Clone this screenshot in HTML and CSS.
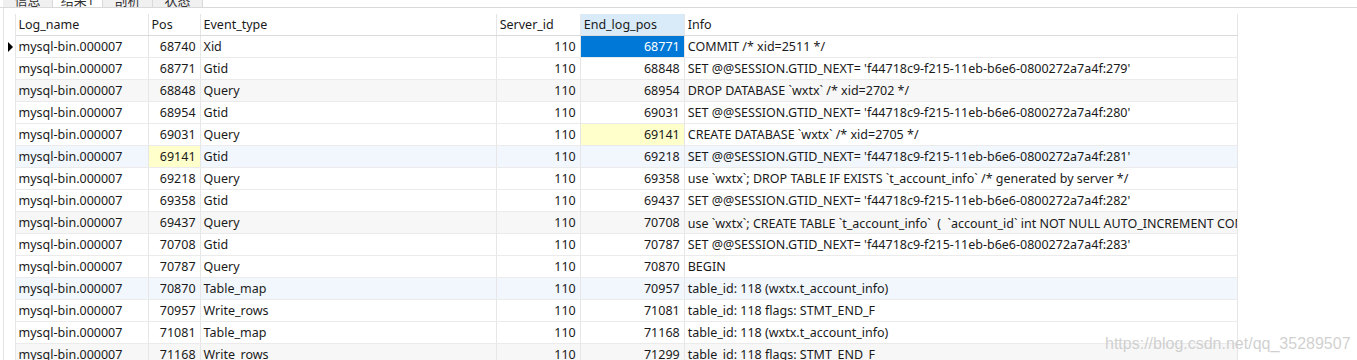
FILE: index.html
```html
<!DOCTYPE html>
<html lang="zh-CN">
<head>
  <meta charset="UTF-8">
  <title>Binlog events</title>
  <link rel="stylesheet" href="styles.css">
</head>
<body>
<!-- Tab strip (cut off at top) -->
<div class="tabs">
  <div class="tab">信息</div>
  <div class="tab active">结果1</div>
  <div class="tab">剖析</div>
  <div class="tab">状态</div>
</div>

<!-- Result grid -->
<div class="grid-wrap">
  <table class="grid">
    <colgroup>
      <col class="c-ind"><col class="c-log"><col class="c-pos"><col class="c-type">
      <col class="c-srv"><col class="c-end"><col class="c-info">
    </colgroup>
    <thead>
      <tr>
        <th class="ind"></th>
        <th>Log_name</th>
        <th>Pos</th>
        <th>Event_type</th>
        <th>Server_id</th>
        <th class="sorted">End_log_pos</th>
        <th>Info</th>
      </tr>
    </thead>
    <tbody>
      <tr><td class="ind"><span class="marker"></span></td><td>mysql-bin.000007</td><td class="num">68740</td><td>Xid</td><td class="num">110</td><td class="num selected">68771</td><td>COMMIT /* xid=2511 */</td></tr>
      <tr><td class="ind"></td><td>mysql-bin.000007</td><td class="num">68771</td><td>Gtid</td><td class="num">110</td><td class="num">68848</td><td>SET @@SESSION.GTID_NEXT= 'f44718c9-f215-11eb-b6e6-0800272a7a4f:279'</td></tr>
      <tr class="alt"><td class="ind"></td><td>mysql-bin.000007</td><td class="num">68848</td><td>Query</td><td class="num">110</td><td class="num">68954</td><td>DROP DATABASE `wxtx` /* xid=2702 */</td></tr>
      <tr><td class="ind"></td><td>mysql-bin.000007</td><td class="num">68954</td><td>Gtid</td><td class="num">110</td><td class="num">69031</td><td>SET @@SESSION.GTID_NEXT= 'f44718c9-f215-11eb-b6e6-0800272a7a4f:280'</td></tr>
      <tr><td class="ind"></td><td>mysql-bin.000007</td><td class="num">69031</td><td>Query</td><td class="num">110</td><td class="num match">69141</td><td>CREATE DATABASE `wxtx` /* xid=2705 */</td></tr>
      <tr class="hl"><td class="ind"></td><td>mysql-bin.000007</td><td class="num match">69141</td><td>Gtid</td><td class="num">110</td><td class="num">69218</td><td>SET @@SESSION.GTID_NEXT= 'f44718c9-f215-11eb-b6e6-0800272a7a4f:281'</td></tr>
      <tr><td class="ind"></td><td>mysql-bin.000007</td><td class="num">69218</td><td>Query</td><td class="num">110</td><td class="num">69358</td><td>use `wxtx`; DROP TABLE IF EXISTS `t_account_info` /* generated by server */</td></tr>
      <tr><td class="ind"></td><td>mysql-bin.000007</td><td class="num">69358</td><td>Gtid</td><td class="num">110</td><td class="num">69437</td><td>SET @@SESSION.GTID_NEXT= 'f44718c9-f215-11eb-b6e6-0800272a7a4f:282'</td></tr>
      <tr class="alt"><td class="ind"></td><td>mysql-bin.000007</td><td class="num">69437</td><td>Query</td><td class="num">110</td><td class="num">70708</td><td>use `wxtx`; CREATE TABLE `t_account_info`&nbsp; (&nbsp; `account_id` int NOT NULL AUTO_INCREMENT COMMENT '账户ID'</td></tr>
      <tr><td class="ind"></td><td>mysql-bin.000007</td><td class="num">70708</td><td>Gtid</td><td class="num">110</td><td class="num">70787</td><td>SET @@SESSION.GTID_NEXT= 'f44718c9-f215-11eb-b6e6-0800272a7a4f:283'</td></tr>
      <tr><td class="ind"></td><td>mysql-bin.000007</td><td class="num">70787</td><td>Query</td><td class="num">110</td><td class="num">70870</td><td>BEGIN</td></tr>
      <tr class="hl"><td class="ind"></td><td>mysql-bin.000007</td><td class="num">70870</td><td>Table_map</td><td class="num">110</td><td class="num">70957</td><td>table_id: 118 (wxtx.t_account_info)</td></tr>
      <tr><td class="ind"></td><td>mysql-bin.000007</td><td class="num">70957</td><td>Write_rows</td><td class="num">110</td><td class="num">71081</td><td>table_id: 118 flags: STMT_END_F</td></tr>
      <tr><td class="ind"></td><td>mysql-bin.000007</td><td class="num">71081</td><td>Table_map</td><td class="num">110</td><td class="num">71168</td><td>table_id: 118 (wxtx.t_account_info)</td></tr>
      <tr class="alt"><td class="ind"></td><td>mysql-bin.000007</td><td class="num">71168</td><td>Write_rows</td><td class="num">110</td><td class="num">71299</td><td>table_id: 118 flags: STMT_END_F</td></tr>
    </tbody>
  </table>
</div>

<!-- Blog watermark -->
<div class="watermark">https://blog.csdn.net/qq_35289507</div>
</body>
</html>
```

FILE: styles.css
```css
html, body {
  margin: 0;
  padding: 0;
  height: 100%;
  overflow: hidden;
  background: #fff;
  font-family: "Noto Sans", "Noto Sans CJK SC", sans-serif;
  font-size: 12.5px;
  color: #1a1a1a;
}

/* Tab strip, only its lower edge is visible */
.tabs {
  display: flex;
  height: 7px;
  padding-left: 3px;
  border-bottom: 1px solid #d9d9d9;
  overflow: hidden;
}

.tab {
  width: 50px;
  height: 7px;
  line-height: 0;
  font-size: 13px;
  color: #333;
  text-align: center;
  background: #f0f0f0;
  border-right: 1px solid #d9d9d9;
  box-sizing: border-box;
}

.tab.active {
  background: #fff;
}

/* Grid */
.grid-wrap {
  margin-left: 3px;
  padding-top: 6px;
  border-left: 1px solid #e3e3e3;
  height: 100%;
}

.grid {
  table-layout: fixed;
  border-collapse: collapse;
  width: 1234px;
}

.c-ind { width: 11px; }
.c-log { width: 133px; }
.c-pos { width: 52px; }
.c-type { width: 296px; }
.c-srv { width: 84px; }
.c-end { width: 104px; }
.c-info { width: 553px; }

.grid th,
.grid td {
  height: 21px;
  padding: 0 3px;
  white-space: nowrap;
  overflow: hidden;
  text-align: left;
  font-weight: normal;
  border-left: 1px solid #e6e6e6;
  border-right: 1px solid #e6e6e6;
  border-bottom: 1px solid #ebebeb;
}

.grid th {
  border-bottom-color: #dadada;
}

.grid th.sorted {
  background: #d9ebf9;
}

.grid .ind {
  padding: 0;
  border-left: none;
  border-bottom: none;
  background: #fff;
}

.marker {
  display: block;
  width: 0;
  height: 0;
  margin-left: 4px;
  border-top: 5px solid transparent;
  border-bottom: 5px solid transparent;
  border-left: 5px solid #000;
}

.grid td.num {
  text-align: right;
  padding-right: 4px;
}

.grid tr.alt td { background: #f7f7f7; }
.grid tr.hl td { background: #f2f7fd; }
.grid tr td.ind { background: #fff; }

.grid td.match,
.grid tr.hl td.match {
  background: #ffffcc;
}

.grid td.selected {
  background: #0078d7;
  color: #fff;
}

/* Watermark over the grid */
.watermark {
  position: absolute;
  left: 1105px;
  top: 335px;
  font-family: "Liberation Sans", Arial, sans-serif;
  font-size: 16px;
  color: rgba(200, 200, 200, 0.85);
  pointer-events: none;
}
```
